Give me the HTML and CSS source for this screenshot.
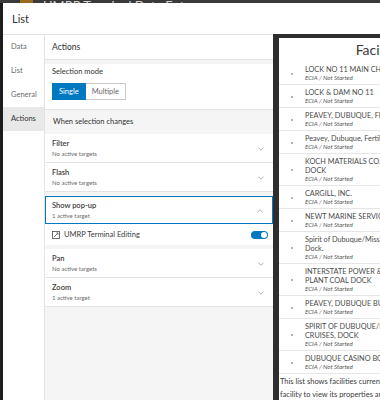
FILE: index.html
```html
<!DOCTYPE html>
<html lang="en">
<head>
    <meta charset="UTF-8" />
    <title>List settings</title>
    <link rel="stylesheet" href="styles.css">
</head>
<body>
<div class="app-bar">
    <span class="app-logo"></span>
    <span class="app-title">UMRP Terminal Data Entry</span>
</div>

<div class="dialog">
    <header class="dialog-header">List</header>

    <div class="dialog-body">
        <nav class="side-nav">
            <div class="nav-item">Data</div>
            <div class="nav-item">List</div>
            <div class="nav-item">General</div>
            <div class="nav-item active">Actions</div>
        </nav>

        <section class="settings">
            <div class="settings-title">Actions</div>

            <div class="selection">
                <div class="selection-label">Selection mode</div>
                <div class="segmented">
                    <span class="seg-btn active">Single</span>
                    <span class="seg-btn">Multiple</span>
                </div>
            </div>

            <div class="group-label">When selection changes</div>

            <div class="action-group">
                <div class="action">
                    <div class="action-text">
                        <div class="action-name">Filter</div>
                        <div class="action-sub">No active targets</div>
                    </div>
                    <svg class="chevron" viewBox="0 0 6 4"><path d="M0.5 0.8 L3 3.2 L5.5 0.8"/></svg>
                </div>
                <div class="action">
                    <div class="action-text">
                        <div class="action-name">Flash</div>
                        <div class="action-sub">No active targets</div>
                    </div>
                    <svg class="chevron" viewBox="0 0 6 4"><path d="M0.5 0.8 L3 3.2 L5.5 0.8"/></svg>
                </div>
            </div>

            <div class="action-group">
                <div class="action open">
                    <div class="action-text">
                        <div class="action-name">Show pop-up</div>
                        <div class="action-sub">1 active target</div>
                    </div>
                    <svg class="chevron" viewBox="0 0 6 4"><path d="M0.5 3.2 L3 0.8 L5.5 3.2"/></svg>
                </div>
                <div class="target-row">
                    <svg class="edit-icon" viewBox="0 0 9 9">
                        <rect x="0.5" y="0.5" width="8" height="8"/>
                        <path d="M2.2 6.8 L6.6 2.4 M5 2.2 L6.8 2.2 L6.8 4"/>
                    </svg>
                    <span class="target-name">UMRP Terminal Editing</span>
                    <span class="toggle"><span class="knob"></span></span>
                </div>
            </div>

            <div class="action-group">
                <div class="action">
                    <div class="action-text">
                        <div class="action-name">Pan</div>
                        <div class="action-sub">No active targets</div>
                    </div>
                    <svg class="chevron" viewBox="0 0 6 4"><path d="M0.5 0.8 L3 3.2 L5.5 0.8"/></svg>
                </div>
                <div class="action">
                    <div class="action-text">
                        <div class="action-name">Zoom</div>
                        <div class="action-sub">1 active target</div>
                    </div>
                    <svg class="chevron" viewBox="0 0 6 4"><path d="M0.5 0.8 L3 3.2 L5.5 0.8"/></svg>
                </div>
            </div>
        </section>

        <section class="preview">
            <div class="preview-inner">
                <h2 class="preview-title">Facilities</h2>
                <ul class="facility-list">
                    <li><span class="dot"></span><div><div class="fac-name">LOCK NO 11 MAIN CHANNEL</div><div class="fac-sub">ECIA / Not Started</div></div></li>
                    <li><span class="dot"></span><div><div class="fac-name">LOCK &amp; DAM NO 11</div><div class="fac-sub">ECIA / Not Started</div></div></li>
                    <li><span class="dot"></span><div><div class="fac-name">PEAVEY, DUBUQUE, FERTILIZER</div><div class="fac-sub">ECIA / Not Started</div></div></li>
                    <li><span class="dot"></span><div><div class="fac-name">Peavey, Dubuque, Fertilizer</div><div class="fac-sub">ECIA / Not Started</div></div></li>
                    <li><span class="dot"></span><div><div class="fac-name">KOCH MATERIALS CO.<br>DOCK</div><div class="fac-sub">ECIA / Not Started</div></div></li>
                    <li><span class="dot"></span><div><div class="fac-name">CARGILL, INC.</div><div class="fac-sub">ECIA / Not Started</div></div></li>
                    <li><span class="dot"></span><div><div class="fac-name">NEWT MARINE SERVICE</div><div class="fac-sub">ECIA / Not Started</div></div></li>
                    <li><span class="dot"></span><div><div class="fac-name">Spirit of Dubuque/Mississippi<br>Dock.</div><div class="fac-sub">ECIA / Not Started</div></div></li>
                    <li><span class="dot"></span><div><div class="fac-name">INTERSTATE POWER &amp;<br>PLANT COAL DOCK</div><div class="fac-sub">ECIA / Not Started</div></div></li>
                    <li><span class="dot"></span><div><div class="fac-name">PEAVEY, DUBUQUE BULK</div><div class="fac-sub">ECIA / Not Started</div></div></li>
                    <li><span class="dot"></span><div><div class="fac-name">SPIRIT OF DUBUQUE/MISSISSIPPI<br>CRUISES, DOCK</div><div class="fac-sub">ECIA / Not Started</div></div></li>
                    <li><span class="dot"></span><div><div class="fac-name">DUBUQUE CASINO BOAT</div><div class="fac-sub">ECIA / Not Started</div></div></li>
                </ul>
                <p class="preview-note">This list shows facilities currently assigned. Select a<br>facility to view its properties and status.</p>
            </div>
        </section>
    </div>
</div>
</body>
</html>
```

FILE: styles.css
```css
:root {
    --blue: #0079c1;
    --text: #323232;
    --text-light: #6a6a6a;
    --border: #e3e3e3;
    --bg-gray: #f5f5f5;
    --frame: #2e2e2e;
}

html, body {
    margin: 0;
    padding: 0;
    width: 380px;
    height: 400px;
    overflow: hidden;
    background: #1c1c1c;
    font-family: "Lato", "Liberation Sans", sans-serif;
    color: var(--text);
}

.app-bar {
    height: 3px;
    overflow: hidden;
    background: #3a3a3a;
    display: flex;
    align-items: flex-end;
}

.app-logo {
    flex: none;
    width: 13px;
    height: 12px;
    margin-left: 20px;
    background: #9a6b1e;
}

.app-title {
    margin-left: 10px;
    font-size: 13px;
    line-height: 13px;
    margin-bottom: -10px;
    color: #d6d6d6;
}

.dialog {
    margin-left: 3px;
    height: 397px;
    background: #fff;
    display: flex;
    flex-direction: column;
}

.dialog-header {
    height: 31px;
    border-bottom: 1px solid var(--border);
    padding-left: 9px;
    display: flex;
    align-items: center;
    font-size: 11px;
    color: var(--text);
}

.dialog-body {
    flex: 1;
    display: flex;
    min-height: 0;
}

/* left nav */
.side-nav {
    width: 41px;
    flex: none;
    border-right: 1px solid var(--border);
}

.nav-item {
    height: 24px;
    line-height: 24px;
    padding-left: 8px;
    font-size: 7.5px;
    color: var(--text-light);
}

.nav-item.active {
    background: #e8e8e8;
    color: var(--text);
}

/* settings column */
.settings {
    width: 228px;
    flex: none;
    background: var(--bg-gray);
}

.settings-title {
    height: 24px;
    line-height: 24px;
    padding-left: 7px;
    background: #fff;
    border-bottom: 1px solid var(--border);
    font-size: 8.5px;
    margin-bottom: 4px;
}

.selection {
    background: #fff;
    padding: 2px 7px 9px;
    border-bottom: 1px solid var(--border);
}

.selection-label {
    font-size: 7.5px;
    line-height: 11px;
    margin-bottom: 1px;
}

.segmented {
    display: inline-flex;
    height: 17px;
    border: 1px solid #cacaca;
    box-sizing: border-box;
}

.seg-btn {
    display: flex;
    align-items: center;
    padding: 0 6px;
    font-size: 7.5px;
    color: var(--text-light);
}

.seg-btn.active {
    background: var(--blue);
    color: #fff;
    margin: -1px 0 -1px -1px;
    padding: 0 7px;
}

.group-label {
    height: 24px;
    line-height: 24px;
    padding-left: 8px;
    font-size: 7.5px;
}

.action-group {
    background: #fff;
    margin-bottom: 4px;
}

.action {
    display: flex;
    align-items: center;
    padding: 5px 9px 4px 7px;
    border-bottom: 1px solid var(--border);
}

.action.open {
    border: 1px solid var(--blue);
    padding: 4px 9px 3px 6px;
}

.action-text {
    flex: 1;
}

.action-name {
    font-size: 7.5px;
    line-height: 10px;
    font-weight: 600;
    color: #3a3a3a;
}

.action-sub {
    font-size: 6px;
    line-height: 9px;
    color: var(--text-light);
}

.chevron {
    width: 6px;
    height: 4px;
    fill: none;
    stroke: #8a8a8a;
    stroke-width: 0.7;
}

.target-row {
    height: 21px;
    display: flex;
    align-items: center;
    padding: 0 5px 0 7px;
}

.edit-icon {
    width: 8px;
    height: 8px;
    fill: none;
    stroke: #4a4a4a;
    stroke-width: 0.9;
    margin-right: 4px;
}

.target-name {
    flex: 1;
    font-size: 7.5px;
    color: #3a3a3a;
}

.toggle {
    width: 17px;
    height: 8px;
    border-radius: 4px;
    background: var(--blue);
    display: flex;
    align-items: center;
    justify-content: flex-end;
    padding-right: 1px;
    box-sizing: border-box;
}

.knob {
    width: 6px;
    height: 6px;
    border-radius: 50%;
    background: #fff;
}

/* preview frame */
.preview {
    flex: 1;
    min-width: 0;
    background: var(--frame);
    padding: 4px 0 0 6px;
    margin-top: -1px;
    overflow: hidden;
}

.preview-inner {
    width: 206px;
    background: #fff;
    height: 100%;
}

.preview-title {
    margin: 0;
    height: 24px;
    line-height: 24px;
    text-align: center;
    font-size: 14px;
    font-weight: 400;
    color: #3a3a3a;
}

.facility-list {
    list-style: none;
    margin: 0;
    padding: 0;
}

.facility-list li {
    display: flex;
    align-items: center;
    padding: 3px 0 2px;
    border-bottom: 1px solid #e6e6e6;
    white-space: nowrap;
}

.dot {
    flex: none;
    width: 2px;
    height: 2px;
    border-radius: 50%;
    background: #9a9a9a;
    margin: 0 12px 0 12px;
}

.fac-name {
    font-size: 7.3px;
    line-height: 9px;
    color: #4a4a4a;
}

.fac-sub {
    font-size: 6.2px;
    line-height: 8px;
    font-style: italic;
    color: #555;
}

.preview-note {
    margin: 0;
    padding: 1px 0 0 1px;
    font-size: 7.5px;
    line-height: 13px;
    color: #3a3a3a;
    white-space: nowrap;
}
```
